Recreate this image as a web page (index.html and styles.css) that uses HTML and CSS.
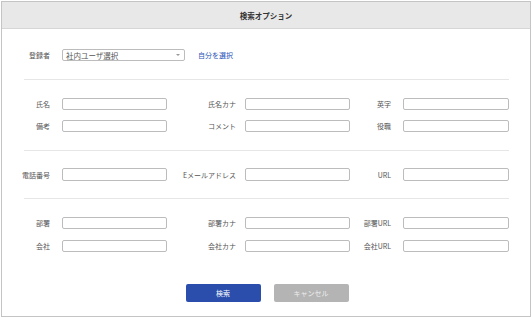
FILE: index.html
```html
<!DOCTYPE html>
<html lang="ja">
<head>
<meta charset="utf-8">
<link rel="stylesheet" href="styles.css">
</head>
<body>
<div class="dialog">
  <div class="dialog-header">検索オプション</div>
  <div class="section section-first">
    <div class="owner-row">
      <span class="label label-1">登録者</span>
      <div class="select"><span>社内ユーザ選択</span><span class="caret"></span></div>
      <a class="link">自分を選択</a>
    </div>
  </div>
  <div class="divider"></div>
  <div class="section">
    <div class="grid">
      <span class="label label-1">氏名</span><div class="input"></div>
      <span class="label label-2">氏名カナ</span><div class="input"></div>
      <span class="label label-3">英字</span><div class="input"></div>
      <span class="label label-1">備考</span><div class="input"></div>
      <span class="label label-2">コメント</span><div class="input"></div>
      <span class="label label-3">役職</span><div class="input"></div>
    </div>
  </div>
  <div class="divider"></div>
  <div class="section section-mid">
    <div class="grid">
      <span class="label label-1">電話番号</span><div class="input tall"></div>
      <span class="label label-2">Eメールアドレス</span><div class="input tall"></div>
      <span class="label label-3">URL</span><div class="input tall"></div>
    </div>
  </div>
  <div class="divider"></div>
  <div class="section section-last">
    <div class="grid grid-loose">
      <span class="label label-1">部署</span><div class="input"></div>
      <span class="label label-2">部署カナ</span><div class="input"></div>
      <span class="label label-3">部署URL</span><div class="input"></div>
      <span class="label label-1">会社</span><div class="input"></div>
      <span class="label label-2">会社カナ</span><div class="input"></div>
      <span class="label label-3">会社URL</span><div class="input"></div>
    </div>
  </div>
  <div class="buttons">
    <button class="btn btn-primary">検索</button>
    <button class="btn btn-cancel">キャンセル</button>
  </div>
</div>
</body>
</html>
```
FILE: styles.css
```css
* { box-sizing: border-box; }
html, body { background: #fff; }
body {
  margin: 1px 0 0 1px;
  font-family: "Noto Sans CJK JP", "Noto Sans", sans-serif;
  color: #555;
}
.dialog {
  width: 530px;
  height: 316px;
  border: 1px solid #c4c4c4;
  background: #fff;
  display: flex;
  flex-direction: column;
}
.dialog-header {
  height: 27px;
  flex-shrink: 0;
  background: #e8e8e8;
  border-bottom: 1px solid #d6d6d6;
  display: flex;
  align-items: center;
  justify-content: center;
  font-size: 7.5px;
  font-weight: bold;
  color: #333;
}
.section { padding: 18px 0; }
.section-first { padding: 20px 0 18px; }
.section-mid { padding: 17px 0; }
.section-last { padding: 18px 0 0; }
.divider {
  height: 1px;
  flex-shrink: 0;
  background: #e6e6e6;
  margin: 0 21px 0 22px;
}
.owner-row {
  display: flex;
  align-items: center;
}
.label {
  font-size: 7px;
  white-space: nowrap;
  text-align: right;
  line-height: 12px;
  color: #555;
}
.label-1 { padding-right: 12px; }
.label-2 { padding-right: 9px; }
.label-3 { padding-right: 12px; }
.owner-row .label-1 { width: 60px; }
.select {
  width: 123px;
  height: 12px;
  border: 1px solid #bcbcbc;
  border-radius: 2px;
  display: flex;
  align-items: center;
  justify-content: space-between;
  padding: 0 4px 0 3px;
  font-size: 7.5px;
  color: #555;
}
.caret {
  width: 0;
  height: 0;
  border-left: 2px solid transparent;
  border-right: 2px solid transparent;
  border-top: 2.5px solid #999;
}
.link {
  margin-left: 13px;
  font-size: 7px;
  color: #2b55b8;
}
.grid {
  display: grid;
  grid-template-columns: 60px 105px 78px 105px 53px 106px;
  row-gap: 10px;
  align-items: center;
}
.grid-loose { row-gap: 11px; }
.input {
  height: 12px;
  border: 1px solid #bcbcbc;
  border-radius: 2px;
  background: #fff;
}
.input.tall { height: 13px; }
.buttons {
  display: flex;
  justify-content: center;
  gap: 13px;
  margin-top: 32px;
  padding-left: 2px;
}
.btn {
  width: 75px;
  height: 18px;
  border: none;
  border-radius: 2px;
  font-family: inherit;
  font-size: 7px;
  padding: 0;
}
.btn-primary { background: #2b4ead; color: #fff; }
.btn-cancel { background: #b4b4b4; color: #eee; }
```
